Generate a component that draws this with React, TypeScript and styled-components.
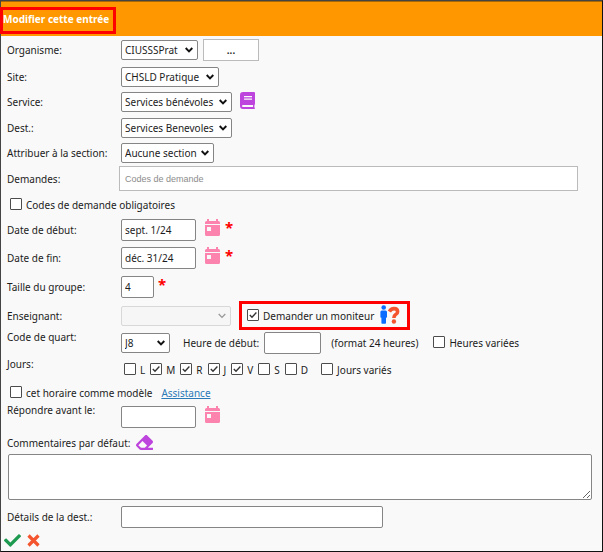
import React, { useId } from "react";
import styled, { createGlobalStyle, css } from "styled-components";
import { FaCheck, FaEraser } from "react-icons/fa";

const GlobalStyle = createGlobalStyle`
  *, *::before, *::after { box-sizing: border-box; }
  body { margin: 0; background: #f9f9f9; }
  body, input, select, textarea, button {
    font-family: "Noto Sans", "Open Sans", sans-serif;
    font-size: 10px;
    color: #1c1c1c;
  }
`;

const Page = styled.form`
  display: flex;
  flex-direction: column;
  background: #f9f9f9;
  border: 1px solid #111;
  border-top-color: #444;
  border-left-color: #444;
  line-height: 16px;
`;

const Header = styled.header`
  display: flex;
  align-items: center;
  height: 35px;
  padding-top: 3px;
  background: #ff9800;
  border-top: 1px solid #a86808;
`;

const Title = styled.h1`
  margin: 0 0 0 -1px;
  padding: 0 4px 4px 0;
  height: 27px;
  border: 3px solid #f00;
  color: #fff;
  font-size: 10px;
  line-height: 18px;
  font-weight: 700;
  white-space: nowrap;
`;

const Row = styled.div<{ $h: number; $top?: boolean }>`
  display: grid;
  grid-template-columns: 114px minmax(0, 1fr);
  align-items: ${(p) => (p.$top ? "start" : "center")};
  min-height: ${(p) => p.$h}px;
  padding-left: 6px;
`;

const Line = styled.div<{ $h: number; $indent?: number }>`
  display: flex;
  align-items: center;
  gap: 6px;
  min-height: ${(p) => p.$h}px;
  padding-left: ${(p) => p.$indent ?? 6}px;
`;

const Label = styled.label`
  white-space: nowrap;
`;

const Caption = styled.span`
  white-space: nowrap;
`;

const Controls = styled.div<{ $gap?: number; $h?: number }>`
  display: flex;
  align-items: center;
  gap: ${(p) => p.$gap ?? 8}px;
  min-height: ${(p) => p.$h ?? 0}px;
`;

const Spaced = styled.span<{ $l?: number; $r?: number }>`
  margin: 0 ${(p) => p.$r ?? 0}px 0 ${(p) => p.$l ?? 0}px;
  white-space: nowrap;
`;

const fieldLook = css`
  background: #fff;
  border: 1px solid #858585;
  border-radius: 2px;
  outline-color: #1a73e8;
`;

const Input = styled.input<{ $w: number }>`
  ${fieldLook}
  width: ${(p) => p.$w}px;
  max-width: 100%;
  height: 22px;
  padding: 0 3px;
`;

const CodesInput = styled.input`
  width: calc(100% - 22px);
  height: 25px;
  margin-left: -2px;
  padding: 0 5px;
  background: #fff;
  border: 1px solid #bbb;
  font-family: "Liberation Sans", Arial, sans-serif;
  font-size: 9px;
  &::placeholder { color: #8c8c8c; opacity: 1; }
`;

const SelectBox = styled.span<{ $w: number; $disabled?: boolean }>`
  display: inline-grid;
  align-items: center;
  width: ${(p) => p.$w}px;
  color: ${(p) => (p.$disabled ? "#999" : "#111")};
  > * { grid-area: 1 / 1; }
  > svg {
    justify-self: end;
    margin-right: 5px;
    pointer-events: none;
  }
`;

const NativeSelect = styled.select`
  ${fieldLook}
  appearance: none;
  width: 100%;
  height: 20px;
  padding: 0 3px;
  &:disabled { background: #f6f6f6; border-color: #d8d8d8; opacity: 1; }
`;

const MoreButton = styled.button`
  width: 56px;
  height: 22px;
  padding: 0;
  background: #fff;
  border: 1px solid #bbb;
  margin-left: -3px;
  font-weight: 600;
`;

const IconButton = styled.button<{ $color: string }>`
  display: inline-flex;
  padding: 0;
  border: 0;
  background: none;
  color: ${(p) => p.$color};
`;

const Star = styled.span`
  align-self: flex-start;
  margin-left: -4px;
  color: #f00;
  font-size: 15px;
  line-height: 16px;
  font-weight: 700;
`;

const CheckLabel = styled.label`
  display: inline-flex;
  align-items: center;
  gap: 4px;
  white-space: nowrap;
`;

const CheckBox = styled.span`
  display: inline-grid;
  place-items: center;
  margin-bottom: 2px;
  > * { grid-area: 1 / 1; }
  > svg { pointer-events: none; visibility: hidden; }
  > input:checked + svg { visibility: visible; }
`;

const CheckInput = styled.input`
  appearance: none;
  width: 12px;
  height: 12px;
  margin: 0;
  background: #fff;
  border: 1px solid #4c4c4c;
  border-radius: 1px;
`;

const Highlight = styled.span`
  display: inline-flex;
  align-items: center;
  gap: 6px;
  height: 23px;
  margin-left: 3px;
  padding: 0 7px 0 5px;
  outline: 3px solid #f00;
`;

const HelpLink = styled.a`
  margin-left: 3px;
  color: #2a7ab8;
  text-decoration: underline;
`;

const Comments = styled.textarea`
  ${fieldLook}
  display: block;
  height: 46px;
  margin: 0 10px 3px 7px;
  resize: vertical;
`;

const Days = styled.div`
  display: flex;
  gap: 5px;
  padding: 0 3px;
`;

const PINK = "#fb83ad";
const PURPLE = "#bd44dc";

function Dropdown(props: { id: string; width: number; value: string; disabled?: boolean }) {
  return (
    <SelectBox $w={props.width} $disabled={props.disabled}>
      <NativeSelect id={props.id} defaultValue={props.value} disabled={props.disabled}>
        <option>{props.value}</option>
      </NativeSelect>
      <svg width="8" height="6" viewBox="0 0 8 6" fill="none" stroke="currentColor" strokeWidth={props.disabled ? 1.3 : 1.9}>
        <path d="M.7 1 4 4.4 7.3 1" />
      </svg>
    </SelectBox>
  );
}

function Check({ label, checked }: { label: string; checked?: boolean }) {
  const id = useId();
  return (
    <CheckLabel htmlFor={id}>
      <CheckBox>
        <CheckInput id={id} type="checkbox" defaultChecked={checked} />
        <svg width="10" height="10" viewBox="0 0 10 10" fill="none" stroke="#333" strokeWidth="1.4">
          <path d="M1.8 5 4 7.2 8.4 2.6" />
        </svg>
      </CheckBox>
      {label}
    </CheckLabel>
  );
}

function CalendarButton() {
  return (
    <IconButton type="button" $color={PINK} aria-label="Calendrier">
      <svg width="17" height="22" viewBox="0 0 17 22" fill="currentColor">
        <path d="M3 0h2v2h7V0h2v2h.5Q16 2 16 3.500V5H1V3.500Q1 2 2.500 2H3Z" />
        <path fillRule="evenodd" d="M1 6h15v9.500q0 1.500-1.500 1.500h-12Q1 17 1 15.500ZM3 8v4h4V8Z" />
      </svg>
    </IconButton>
  );
}

function BookIcon() {
  return (
    <svg width="15" height="21" viewBox="0 0 15 21" fill="currentColor">
      <path
        fillRule="evenodd"
        d="M3 0h11q1 0 1 1v11q0 .7-.6 1v2.500q.6.100.6.800 0 .7-.8.700H3q-3 0-3-3V3Q0 0 3 0ZM4 4v1.200h8V4ZM4 6.500v1.200h8V6.500ZM3 13q-1 0-1 1t1 1h10v-2Z"
      />
    </svg>
  );
}

function MonitorIcon() {
  return (
    <svg width="20" height="21" viewBox="0 0 20 21">
      <g fill="#0b6cff">
        <circle cx="3.700" cy="2.500" r="2.300" />
        <path d="M1.800 5.400h3.800q1.400 0 1.400 1.500v5q0 .8-.8.800H6v5.300q0 .8-.8.800H2.200q-.8 0-.8-.8v-5.300h-.2q-.8 0-.8-.8v-5Q.4 5.400 1.800 5.400Z" />
      </g>
      <path d="M9.400 6.600Q10.900 3.600 14 3.600 17.600 3.600 17.600 6.700 17.600 8.400 15.700 9.500 13.900 10.600 13.900 13" fill="none" stroke="#f4552f" strokeWidth="3.600" />
      <circle cx="13.900" cy="16.500" r="2.200" fill="#f4552f" />
    </svg>
  );
}

function CrossIcon() {
  return (
    <svg width="13" height="13" viewBox="0 0 13 13" fill="none" stroke="currentColor" strokeWidth="3.200">
      <path d="M1.500 1.500 11.500 11.500M11.500 1.500 1.500 11.500" />
    </svg>
  );
}

const DAYS: [string, boolean][] = [
  ["L", false],
  ["M", true],
  ["R", true],
  ["J", true],
  ["V", true],
  ["S", false],
  ["D", false],
];

export default function App() {
  return (
    <>
      <GlobalStyle />
      <Page onSubmit={(e: React.FormEvent) => e.preventDefault()}>
        <Header>
          <Title>Modifier cette entrée</Title>
        </Header>
        <Row $h={28}>
          <Label htmlFor="org">Organisme:</Label>
          <Controls>
            <Dropdown id="org" width={77} value="CIUSSSPrat" />
            <MoreButton type="button">...</MoreButton>
          </Controls>
        </Row>
        <Row $h={25}>
          <Label htmlFor="site">Site:</Label>
          <Dropdown id="site" width={98} value="CHSLD Pratique" />
        </Row>
        <Row $h={26}>
          <Label htmlFor="service">Service:</Label>
          <Controls>
            <Dropdown id="service" width={111} value="Services bénévoles" />
            <IconButton type="button" $color={PURPLE} aria-label="Répertoire">
              <BookIcon />
            </IconButton>
          </Controls>
        </Row>
        <Row $h={25}>
          <Label htmlFor="dest">Dest.:</Label>
          <Dropdown id="dest" width={111} value="Services Benevoles" />
        </Row>
        <Row $h={25}>
          <Label htmlFor="section">Attribuer à la section:</Label>
          <Dropdown id="section" width={93} value="Aucune section" />
        </Row>
        <Row $h={27}>
          <Label htmlFor="codes">Demandes:</Label>
          <CodesInput id="codes" placeholder="Codes de demande" />
        </Row>
        <Line $h={25} $indent={9}>
          <Check label="Codes de demande obligatoires" />
        </Line>
        <Row $h={26}>
          <Label htmlFor="start">Date de début:</Label>
          <Controls>
            <Input id="start" $w={75} defaultValue="sept. 1/24" />
            <CalendarButton />
            <Star>*</Star>
          </Controls>
        </Row>
        <Row $h={29}>
          <Label htmlFor="end">Date de fin:</Label>
          <Controls>
            <Input id="end" $w={75} defaultValue="déc. 31/24" />
            <CalendarButton />
            <Star>*</Star>
          </Controls>
        </Row>
        <Row $h={30}>
          <Label htmlFor="size">Taille du groupe:</Label>
          <Controls>
            <Input id="size" $w={33} defaultValue="4" />
            <Star>*</Star>
          </Controls>
        </Row>
        <Row $h={27}>
          <Label htmlFor="teacher">Enseignant:</Label>
          <Controls>
            <Dropdown id="teacher" width={110} value="" disabled />
            <Highlight>
              <Check label="Demander un moniteur" checked />
              <MonitorIcon />
            </Highlight>
          </Controls>
        </Row>
        <Row $h={27} $top>
          <Label htmlFor="shift">Code de quart:</Label>
          <Controls $gap={4} $h={27}>
            <Dropdown id="shift" width={49} value="J8" />
            <Controls as="label" htmlFor="hour" $gap={5}>
              <Spaced $l={9}>Heure de début:</Spaced>
              <Input id="hour" $w={57} />
            </Controls>
            <Spaced $l={6} $r={11}>(format 24 heures)</Spaced>
            <Check label="Heures variées" />
          </Controls>
        </Row>
        <Row $h={27} $top>
          <Caption>Jours:</Caption>
          <Controls $gap={10} $h={27}>
            <Days role="group" aria-label="Jours">
              {DAYS.map(([d, on]) => (
                <Check key={d} label={d} checked={on} />
              ))}
            </Days>
            <Check label="Jours variés" />
          </Controls>
        </Row>
        <Line $h={19} $indent={9}>
          <Check label="cet horaire comme modèle" />
          <HelpLink href="#assistance">Assistance</HelpLink>
        </Line>
        <Row $h={29} $top>
          <Label htmlFor="reply">Répondre avant le:</Label>
          <Controls $h={29}>
            <Input id="reply" $w={75} />
            <CalendarButton />
          </Controls>
        </Row>
        <Line $h={23}>
          <Label htmlFor="comments">Commentaires par défaut:</Label>
          <IconButton type="button" $color={PURPLE} aria-label="Effacer">
            <FaEraser size={17} />
          </IconButton>
        </Line>
        <Comments id="comments" />
        <Row $h={27}>
          <Label htmlFor="details">Détails de la dest.:</Label>
          <Input id="details" $w={262} />
        </Row>
        <Line $h={21} $indent={3}>
          <IconButton type="submit" $color="#1d9a50" aria-label="Enregistrer">
            <FaCheck size={17} />
          </IconButton>
          <IconButton type="button" $color="#f4552f" aria-label="Annuler">
            <CrossIcon />
          </IconButton>
        </Line>
      </Page>
    </>
  );
}
